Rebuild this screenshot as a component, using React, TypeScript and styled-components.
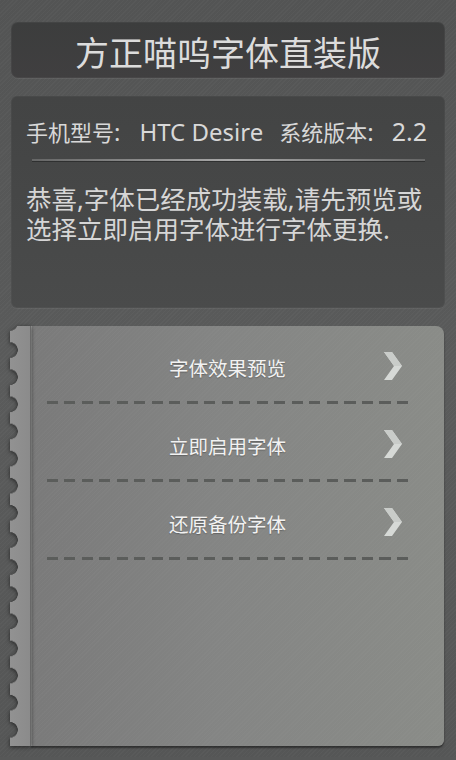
import React from "react";
import styled, { createGlobalStyle } from "styled-components";

const Global = createGlobalStyle`
  html, body { margin: 0; padding: 0; }
  body {
    width: 456px;
    height: 760px;
    overflow: hidden;
    background: #575858;
    font-family: "Noto Sans", "Noto Sans CJK SC", sans-serif;
  }
`;

const Screen = styled.div`
  box-sizing: border-box;
  width: 456px;
  height: 760px;
  padding: 22px 11px 0 11px;
  display: flex;
  flex-direction: column;
  gap: 18px;
  border-top: 3px solid #4a4b4b;
  margin-top: -3px;
  background:
    repeating-linear-gradient(135deg, rgba(255,255,255,0.025) 0 1px, rgba(0,0,0,0) 1px 3px),
    linear-gradient(180deg, #535454, #5a5b5b 50%, #555656);
`;

const TitleBar = styled.div`
  height: 56px;
  border-radius: 7px;
  background: linear-gradient(180deg, #3c3d3d, #403f40);
  box-shadow: inset 0 0 0 1px rgba(255,255,255,0.04), 0 1px 0 rgba(255,255,255,0.06);
  display: flex;
  align-items: center;
  justify-content: center;
  color: #dcdcdc;
  font-family: "Noto Sans CJK SC", sans-serif;
  font-size: 34px;
  line-height: 1;
  padding-top: 3px;
  box-sizing: border-box;
`;

const InfoPanel = styled.div`
  height: 212px;
  border-radius: 6px;
  background: linear-gradient(180deg, #434444, #474848 60%, #4a4b4b);
  box-shadow: inset 0 0 0 1px rgba(255,255,255,0.03), 0 1px 0 rgba(255,255,255,0.05);
  box-sizing: border-box;
  padding: 20px 14px 0 15px;
  display: flex;
  flex-direction: column;
  color: #d8d8d8;
`;

const InfoLine = styled.div`
  font-size: 24px;
  line-height: 30px;
  white-space: nowrap;
`;

const Han = styled.span<{ $gap?: number }>`
  font-family: "Noto Sans CJK SC", sans-serif;
  font-size: 22px;
  margin-left: ${(p) => p.$gap ?? 0}px;
`;

const Val = styled.span<{ $gap?: number; $size?: number }>`
  margin-left: ${(p) => p.$gap ?? 0}px;
  font-size: ${(p) => p.$size ?? 24}px;
`;

const Separator = styled.div`
  margin: 12px 6px 0 6px;
  height: 3px;
  background: linear-gradient(90deg, rgba(150,150,150,0.4), #a8a8a8 50%, rgba(150,150,150,0.4));
  background-size: 100% 2px;
  background-repeat: no-repeat;
  border-bottom: 1px solid #2f3030;
  box-sizing: border-box;
`;

const Message = styled.p`
  margin: 22px 0 0 0;
  font-size: 25.5px;
  line-height: 30px;
  white-space: nowrap;
  color: #d6d6d6;
`;

const MenuPanel = styled.div`
  display: flex;
  height: 420px;
  margin: 0 1px 0 -1px;
`;

const StripShadow = styled.div`
  width: 21px;
  flex: none;
  display: flex;
  filter: drop-shadow(0 1px 2px rgba(0,0,0,0.6));
`;

const Strip = styled.div`
  flex: 1;
  box-sizing: border-box;
  background: linear-gradient(90deg, #929292, #8b8b8b);
  border-right: 1px solid #686868;
  clip-path: polygon(5px 0, 100% 0, 100% 100%, 0 100%, 0 5px);
  -webkit-mask: radial-gradient(circle at 0 50%, transparent 7.5px, #000 8px) 0 10.5px / 100% 27.14px repeat-y;
  mask: radial-gradient(circle at 0 50%, transparent 7.5px, #000 8px) 0 10.5px / 100% 27.14px repeat-y;
`;

const MenuBody = styled.div`
  flex: 1;
  border-radius: 0 8px 6px 0;
  background:
    repeating-linear-gradient(135deg, rgba(255,255,255,0.02) 0 1px, rgba(0,0,0,0) 1px 3px),
    linear-gradient(90deg, #7a7a7a, #848584 45%, #8a8c88);
  box-shadow: inset 1px 0 0 #999a99, 0 2px 2px rgba(0,0,0,0.45);
  display: flex;
  flex-direction: column;
  padding: 0 36px 0 16px;
`;

const Row = styled.div`
  display: flex;
  flex-direction: column;
  height: 78px;
`;

const RowMain = styled.div`
  height: 75px;
  box-sizing: border-box;
  padding-top: 8px;
  display: grid;
  grid-template-columns: 1fr auto;
  align-items: center;
`;

const RowLabel = styled.span`
  grid-area: 1 / 1 / 2 / 3;
  justify-self: center;
  font-family: "Noto Sans CJK SC", sans-serif;
  font-size: 19.5px;
  color: #f2f2f2;
  text-shadow: 0 1px 1px rgba(0,0,0,0.25);
`;

const Chevron = styled.svg`
  grid-area: 1 / 2 / 2 / 3;
  margin-right: 6px;
  margin-top: -4px;
  width: 18px;
  height: 28px;
`;

const Dash = styled.div`
  height: 3px;
  background: repeating-linear-gradient(90deg, #5b5d5b 0 11px, rgba(0,0,0,0) 11px 17.5px);
`;

const items = ["字体效果预览", "立即启用字体", "还原备份字体"];

export default function App() {
  return (
    <>
      <Global />
      <Screen>
        <TitleBar>方正喵呜字体直装版</TitleBar>
        <InfoPanel>
          <InfoLine>
            <Han>手机型号</Han>:<Val $gap={19}>HTC Desire</Val>
            <Han $gap={16}>系统版本</Han>:<Val $gap={18} $size={25}>2.2</Val>
          </InfoLine>
          <Separator />
          <Message>
            恭喜,字体已经成功装载,请先预览或
            <br />
            选择立即启用字体进行字体更换.
          </Message>
        </InfoPanel>
        <MenuPanel>
          <StripShadow>
            <Strip />
          </StripShadow>
          <MenuBody>
            {items.map((t) => (
              <Row key={t}>
                <RowMain>
                  <RowLabel>{t}</RowLabel>
                  <Chevron viewBox="0 0 18 28">
                    <path d="M0 0 H8 L18 14 L8 28 H0 L10 14 Z" fill="#d6d9d6" />
                    <path d="M0 0 H8 L18 14 H10 Z" fill="#c9ccc9" />
                  </Chevron>
                </RowMain>
                <Dash />
              </Row>
            ))}
          </MenuBody>
        </MenuPanel>
      </Screen>
    </>
  );
}
